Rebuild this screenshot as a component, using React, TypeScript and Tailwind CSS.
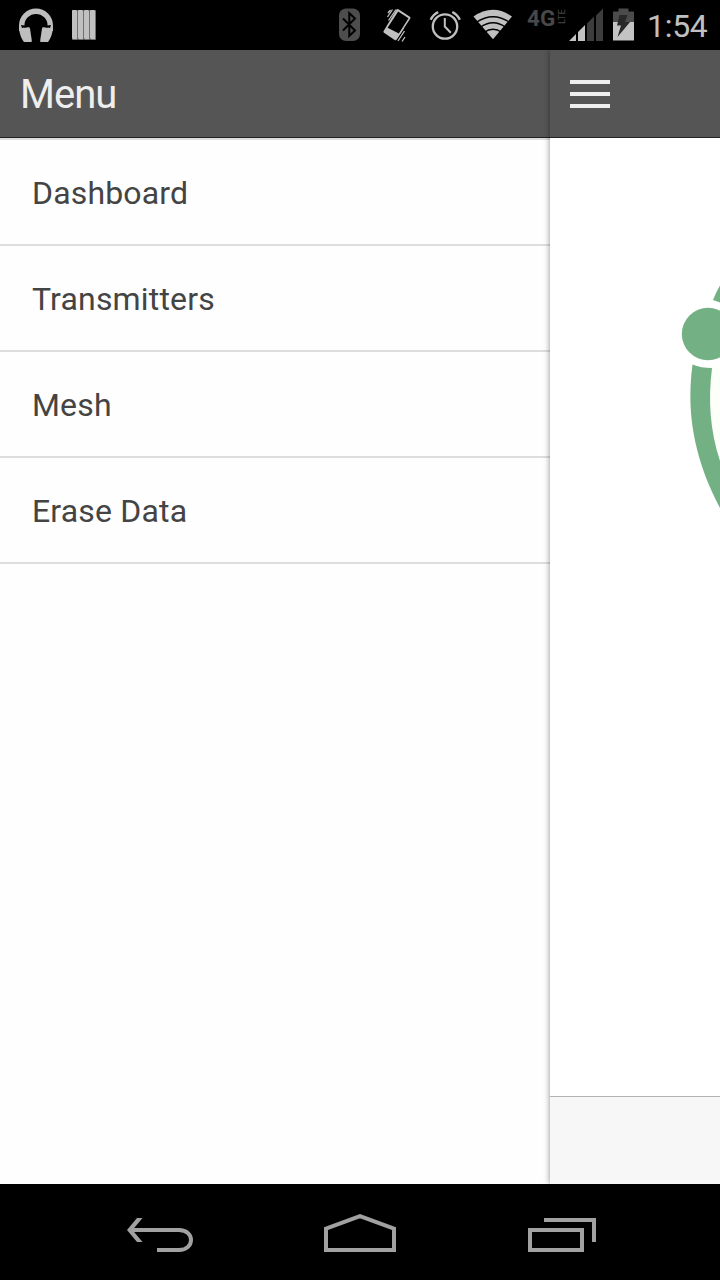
import React from "react";

const menuItems = ["Dashboard", "Transmitters", "Mesh", "Erase Data"];

function StatusBar() {
  return (
    <header className="flex h-[50px] shrink-0 items-center bg-black text-[#c0c0c0]">
      <svg className="ml-4 h-[50px] w-10 shrink-0" viewBox="16 0 40 50" fill="#bebebe">
        <path d="M21.7 31V25.5a14.3 14.3 0 0 1 28.6 0V31" fill="none" stroke="#bebebe" strokeWidth="5.4" />
        <path d="M19 25c0 8 2 13 5 17h6.500c1 0 1.500-.6 1.300-1.600L30 28.500c-.2-1-1-1.500-2-1.300L21 28.500V25z" />
        <path d="M53 25c0 8-2 13-5 17h-6.500c-1 0-1.500-.6-1.300-1.600l1.800-11.900c.2-1 1-1.500 2-1.300l7 1.300V25z" />
        <path d="M21 25l1 3 4-1-1.500-1.500zM51 25l-1 3-4-1 1.500-1.500z" fill="#000" />
      </svg>
      <svg className="ml-4 h-[50px] w-[26px] shrink-0" viewBox="72 0 26 50">
        {[72, 78, 84, 90].map((x) => (
          <g key={x}>
            <path d={`M${x} 11q0-1 1-1h4q1 0 1 1v28q0 1-1 1h-4q-1 0-1-1z`} fill="#707070" />
            <path d={`M${x} 11q0-1 1-1h3l1 1v28h-4l-1-1z`} fill="#c0c0c0" />
          </g>
        ))}
      </svg>
      <svg className="ml-[238px] h-[50px] w-6 shrink-0" viewBox="336 0 24 50">
        <rect x="339" y="8.500" width="21" height="32.500" rx="7" fill="#4d4d4d" />
        <path d="M343 18.500l12 12-5.700 5.500V13l5.700 5.500-12 12" fill="none" stroke="#000" strokeWidth="2" />
      </svg>
      <svg className="ml-5 h-[50px] w-8 shrink-0" viewBox="380 0 32 50">
        <path d="M396.600 9.600q.7-1 1.800-.4l11.500 7.500q1 .7.4 1.800L396.500 39.700q-.7 1-1.800.4L384 32.700q-1-.7-.4-1.800z" fill="#c0c0c0" />
        <path d="M398.200 11.500l10.300 6.700-9.600 15.200-11.300-5.700z" fill="#000" />
        <path d="M387.500 17l5-7.500M388.500 20.500l7.500-11M388 13l2.500-3M398 41l6.500-10M402 41.500l3-4.500M396.500 38.500l7-10.500" stroke="#c0c0c0" strokeWidth="1.300" />
      </svg>
      <svg className="ml-4 h-[50px] w-9 shrink-0" viewBox="428 0 36 50" fill="none" stroke="#c0c0c0">
        <circle cx="445" cy="26.500" r="12.200" strokeWidth="2.300" />
        <path d="M444.800 18v8.500l6 6.200" strokeWidth="2" />
        <path d="M430.700 19.700q2.300-5 7.500-7.700M459.800 19.700q-2.300-5-7.500-7.700" strokeWidth="2.400" />
      </svg>
      <svg className="ml-2 h-[50px] w-[42px] shrink-0" viewBox="472 0 42 50">
        <path d="M473.500 16.500q19.200-13.500 38.500 0L493 39.300z" fill="#c0c0c0" />
        <path d="M476 22.500q17-11.500 34 0M480 27.500q13-9.500 26 0M484 32.500q9-6.500 18 0" fill="none" stroke="#000" strokeWidth="1.400" />
      </svg>
      <div className="flex h-[50px] w-[55px] shrink-0 items-start pl-[13px] pt-[6px] text-[#484848]">
        <span className="w-[29px] text-[22.500px] font-bold leading-[24px]">4G</span>
        <span className="ml-px mt-[2px] h-[18px] w-[9px] rotate-180 text-center text-[9.500px] leading-[9px] [writing-mode:vertical-rl]">LTE</span>
      </div>
      <svg className="h-[50px] w-9 shrink-0" viewBox="569 0 36 50">
        <path d="M569 41l7-7v7zM578 32l7-7v16h-7z" fill="#c3c3c3" />
        <path d="M587 23.500l7-7V41h-7zM596 15.500l7-7V41h-7z" fill="#3d3d3d" />
      </svg>
      <svg className="ml-2 h-[50px] w-[22px] shrink-0" viewBox="613 0 22 50">
        <path d="M613 22V11.500h5.500V8.500h10v3h5.500V22z" fill="#4b4b4b" />
        <path d="M613 22h21v18.500h-21z" fill="#c3c3c3" />
        <path d="M619.500 15h8l-2.500 7h5L617.500 37l3.500-11.500h-4z" fill="#282828" />
      </svg>
      <span className="ml-3 whitespace-nowrap pt-px text-[32px] leading-8 tracking-[-0.3px]">1:54</span>
    </header>
  );
}

function MenuPanel() {
  return (
    <aside className="flex w-[550px] shrink-0 flex-col bg-[#fefefe]">
      <h1 className="flex h-[88px] items-center border-b border-[#222] bg-[#555] pl-5 pt-[3px] text-[40px] font-normal leading-10 tracking-[-1px] text-[#eee]">
        Menu
      </h1>
      <ul className="border-t-2 border-[#ddd]">
        {menuItems.map((item) => (
          <li key={item} className="flex h-[106px] items-center border-b-2 border-[#ddd] pl-8 pt-[2px] text-[32px] leading-8 tracking-[0.17px] text-[#444]">
            {item}
          </li>
        ))}
      </ul>
    </aside>
  );
}

function ContentPanel() {
  return (
    <main className="relative flex w-[170px] shrink-0 flex-col bg-white shadow-[0_0_6px_rgba(0,0,0,0.45)]">
      <div className="flex h-[88px] shrink-0 items-center border-b border-[#222] bg-[#555] pl-5">
        <button aria-label="Open menu" className="flex w-10 flex-col gap-2">
          <span className="h-1 bg-[#eee]" />
          <span className="h-1 bg-[#eee]" />
          <span className="h-1 bg-[#eee]" />
        </button>
      </div>
      <div className="flex grow justify-end pt-[132px]">
        <svg className="h-[250px] w-[60px]" viewBox="660 270 60 250">
          <path d="M711 367C709 406 712 440 725 470V367z" fill="#fdfff9" />
          <path d="M720 285.500q-4 6.500-7 14.500l7 2.500zM692.500 364.500Q701 368 712 368C708 400 710 430 720 461V508C698 466 685 420 692.500 364.500z" fill="#73b185" />
          <circle cx="708" cy="334" r="26.200" fill="#73b185" />
        </svg>
      </div>
      <footer className="h-[88px] shrink-0 border-t border-[#b2b2b2] bg-[#f7f7f7]" />
    </main>
  );
}

function NavigationBar() {
  return (
    <nav className="flex h-24 shrink-0 items-center bg-black">
      <svg className="ml-[124px] h-24 w-[72px]" viewBox="124 1184 72 96" fill="none" stroke="#a1a1a1" strokeWidth="4">
        <path d="M130 1230h49c16 0 16 20 0 20h-22" />
        <path d="M127 1230l10-12h5.500l-10 12 10 12H137z" fill="#a1a1a1" stroke="none" />
      </svg>
      <svg className="ml-32 h-24 w-[72px]" viewBox="324 1184 72 96" fill="none" stroke="#a1a1a1" strokeWidth="4">
        <path d="M326 1228.600v21.400h68v-21.400l-34-12.400z" />
      </svg>
      <svg className="ml-32 h-24 w-[76px]" viewBox="524 1184 76 96" fill="none" stroke="#a1a1a1" strokeWidth="4">
        <path d="M544 1220h50v22M530 1230h52v20h-52z" />
      </svg>
    </nav>
  );
}

export default function App() {
  return (
    <div className="flex h-[1280px] w-[720px] flex-col overflow-hidden bg-black font-['Roboto',sans-serif]">
      <StatusBar />
      <div className="flex min-h-0 grow overflow-hidden">
        <MenuPanel />
        <ContentPanel />
      </div>
      <NavigationBar />
    </div>
  );
}
